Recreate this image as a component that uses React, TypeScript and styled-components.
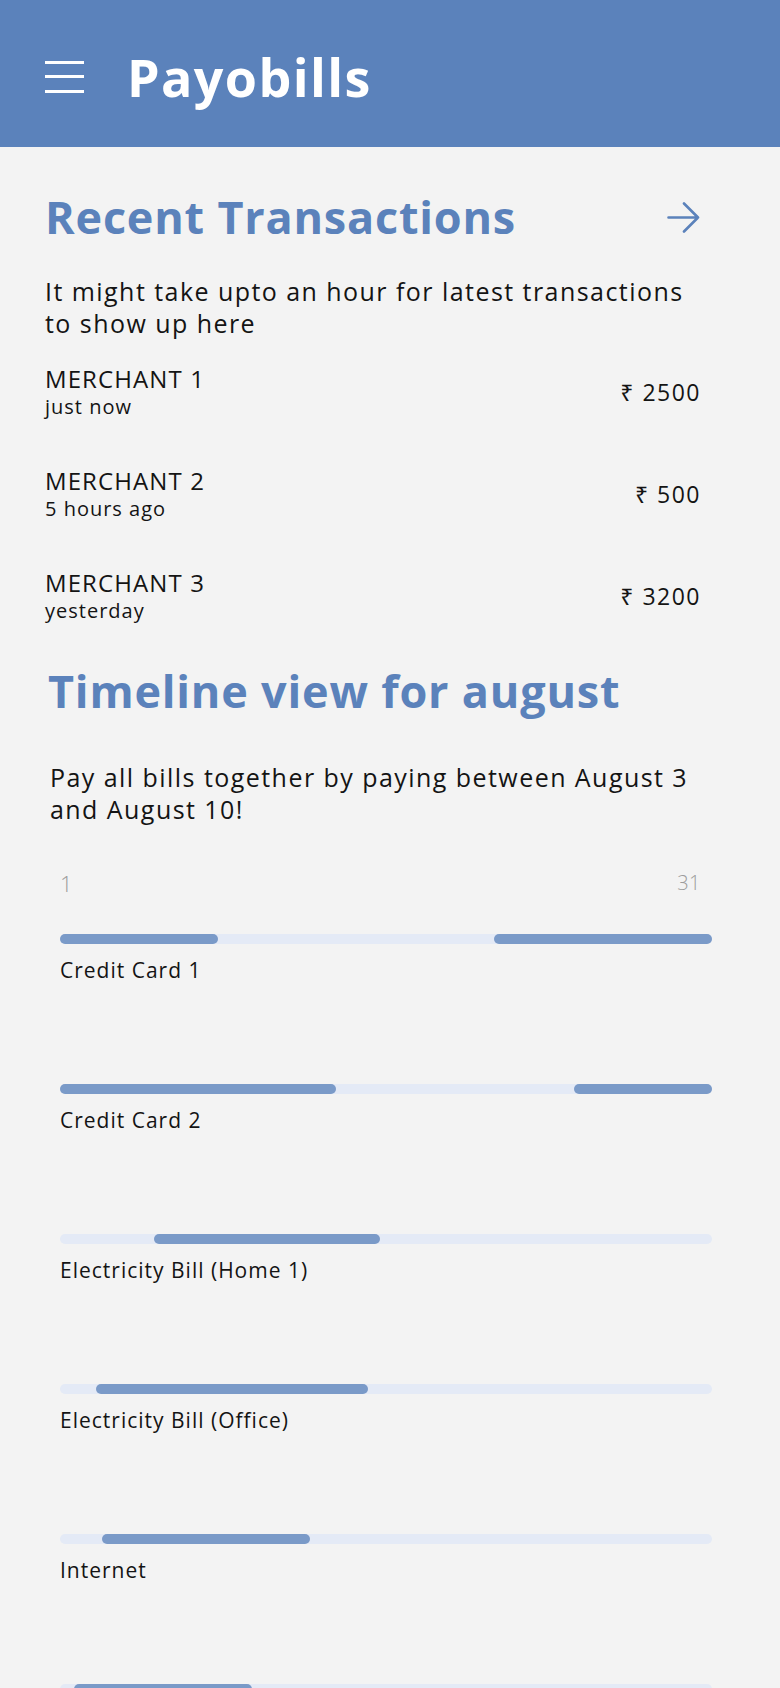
import React from "react";
import styled, { createGlobalStyle } from "styled-components";

const FONT = `"Open Sans", "Noto Sans", sans-serif`;

const Global = createGlobalStyle`
  html, body {
    margin: 0;
    padding: 0;
    background: #f3f3f3;
    overflow: hidden;
  }
  body {
    font-family: ${FONT};
    color: #141414;
  }
  * { box-sizing: border-box; }
`;

const Page = styled.div`
  width: 780px;
  min-height: 1688px;
  background: #f3f3f3;
`;

const Header = styled.header`
  height: 147px;
  background: #5b82bb;
  display: flex;
  align-items: center;
  padding: 6px 0 0 45px;
  gap: 43px;
`;

const Burger = styled.button`
  width: 39px;
  height: 32px;
  padding: 0;
  border: 0;
  background: transparent;
  display: flex;
  flex-direction: column;
  justify-content: space-between;
  cursor: pointer;
  span {
    display: block;
    height: 3px;
    background: #ffffff;
  }
`;

const Brand = styled.h1`
  margin: 0;
  font-size: 52px;
  line-height: 1;
  font-weight: 700;
  color: #ffffff;
  letter-spacing: 1.4px;
`;

const Main = styled.main`
  padding: 0 80px 0 45px;
`;

const TitleRow = styled.div`
  display: flex;
  align-items: center;
  justify-content: space-between;
  margin-top: 43px;
`;

const SectionTitle = styled.h2<{ $indent?: number; $top?: number }>`
  margin: ${(p) => p.$top ?? 0}px 0 0;
  padding-left: ${(p) => p.$indent ?? 0}px;
  font-size: 45px;
  line-height: 54px;
  font-weight: 700;
  color: #5b82bb;
  letter-spacing: 0.8px;
`;

const ArrowButton = styled.button`
  border: 0;
  background: transparent;
  padding: 0;
  width: 33px;
  height: 31px;
  display: flex;
  align-items: center;
  justify-content: center;
  cursor: pointer;
  color: #5b82bb;
`;

const Note = styled.p<{ $indent?: number; $top: number }>`
  margin: ${(p) => p.$top}px 0 0;
  padding-left: ${(p) => p.$indent ?? 0}px;
  font-size: 25px;
  line-height: 32px;
  font-weight: 400;
  letter-spacing: 1.45px;
  color: #141414;
`;

const TxList = styled.ul`
  list-style: none;
  margin: 26px 0 0;
  padding: 0;
  display: flex;
  flex-direction: column;
  gap: 48px;
`;

const TxRow = styled.li`
  display: flex;
  align-items: center;
  justify-content: space-between;
`;

const TxInfo = styled.div`
  display: flex;
  flex-direction: column;
`;

const Merchant = styled.span`
  font-size: 24px;
  line-height: 28px;
  letter-spacing: 1.1px;
  text-transform: uppercase;
`;

const When = styled.span`
  margin-top: 2px;
  font-size: 20px;
  line-height: 24px;
  letter-spacing: 1px;
`;

const Amount = styled.span`
  font-size: 23px;
  line-height: 26px;
  letter-spacing: 1.5px;
  margin-right: -1px;
`;

const Timeline = styled.section``;

const Scale = styled.div`
  margin: 45px -12px 0 15px;
  padding-right: 11px;
  display: flex;
  justify-content: space-between;
  align-items: flex-start;
  color: #9c9c9c;
  font-weight: 300;
  letter-spacing: 0.5px;
`;

const DayMark = styled.span<{ $size: number }>`
  font-size: ${(p) => p.$size}px;
  line-height: 26px;
`;

const Bills = styled.div`
  margin: 38px -12px 0 15px;
  display: flex;
  flex-direction: column;
  gap: 101px;
`;

const Bill = styled.div`
  display: flex;
  flex-direction: column;
  gap: 13px;
`;

const Track = styled.div`
  position: relative;
  height: 10px;
  border-radius: 5px;
  background: #e4eaf6;
`;

const Segment = styled.div`
  position: absolute;
  top: 0;
  bottom: 0;
  border-radius: 5px;
  background: #7a9ac8;
`;

const BillName = styled.span`
  font-size: 21px;
  line-height: 26px;
  letter-spacing: 1px;
  color: #141414;
`;

const TRACK_W = 652;

const transactions = [
  { name: "Merchant 1", when: "just now", amount: "2500" },
  { name: "Merchant 2", when: "5 hours ago", amount: "500" },
  { name: "Merchant 3", when: "yesterday", amount: "3200" },
];

const bills: { name: string; segs: [number, number][] }[] = [
  { name: "Credit Card 1", segs: [[0, 158], [434, 652]] },
  { name: "Credit Card 2", segs: [[0, 276], [514, 652]] },
  { name: "Electricity Bill (Home 1)", segs: [[94, 320]] },
  { name: "Electricity Bill (Office)", segs: [[36, 308]] },
  { name: "Internet", segs: [[42, 250]] },
  { name: "Water Bill", segs: [[14, 192]] },
];

const Arrow = () => (
  <svg width="33" height="31" viewBox="0 0 33 31" fill="none">
    <path
      d="M1.5 15.5H31M17 1.5L31 15.5L17 29.5"
      stroke="currentColor"
      strokeWidth="2.6"
      strokeLinecap="round"
      strokeLinejoin="round"
    />
  </svg>
);

export default function App() {
  return (
    <Page>
      <Global />
      <Header>
        <Burger aria-label="menu">
          <span />
          <span />
          <span />
        </Burger>
        <Brand>Payobills</Brand>
      </Header>
      <Main>
        <section>
          <TitleRow>
            <SectionTitle>Recent Transactions</SectionTitle>
            <ArrowButton aria-label="all transactions">
              <Arrow />
            </ArrowButton>
          </TitleRow>
          <Note $top={31}>
            It might take upto an hour for latest transactions to show up here
          </Note>
          <TxList>
            {transactions.map((t) => (
              <TxRow key={t.name}>
                <TxInfo>
                  <Merchant>{t.name}</Merchant>
                  <When>{t.when}</When>
                </TxInfo>
                <Amount>₹ {t.amount}</Amount>
              </TxRow>
            ))}
          </TxList>
        </section>
        <Timeline>
          <SectionTitle $indent={3} $top={41}>
            Timeline view for august
          </SectionTitle>
          <Note $top={43} $indent={5}>
            Pay all bills together by paying between August 3 and August 10!
          </Note>
          <Scale>
            <DayMark $size={22}>1</DayMark>
            <DayMark $size={20}>31</DayMark>
          </Scale>
          <Bills>
            {bills.map((b) => (
              <Bill key={b.name}>
                <Track>
                  {b.segs.map(([s, e]) => (
                    <Segment
                      key={s}
                      style={{
                        left: `${(s / TRACK_W) * 100}%`,
                        width: `${((e - s) / TRACK_W) * 100}%`,
                      }}
                    />
                  ))}
                </Track>
                <BillName>{b.name}</BillName>
              </Bill>
            ))}
          </Bills>
        </Timeline>
      </Main>
    </Page>
  );
}
